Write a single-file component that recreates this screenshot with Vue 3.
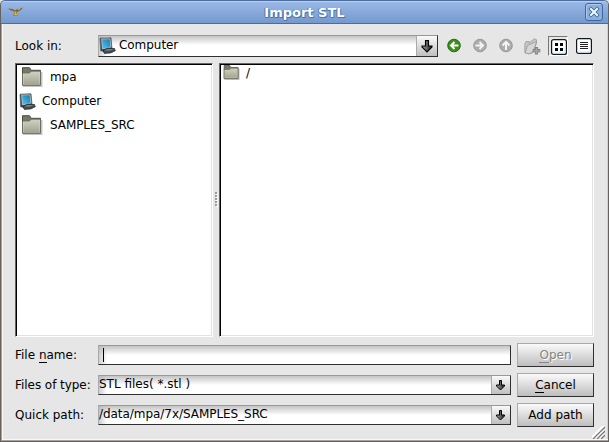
<script setup>
import { ref } from 'vue'
const places = [
  { name: 'mpa', icon: 'folder' },
  { name: 'Computer', icon: 'computer' },
  { name: 'SAMPLES_SRC', icon: 'folder' },
]
const fileType = ref('STL files( *.stl )')
const quickPath = ref('/data/mpa/7x/SAMPLES_SRC')
</script>

<template>
  <div class="window">
    <svg class="defs" width="0" height="0">
      <defs>
        <linearGradient id="folderFill" x1="0" y1="0" x2="0" y2="1"><stop offset="0" stop-color="#d0d1c1"/><stop offset="1" stop-color="#a4a58f"/></linearGradient>
        <linearGradient id="screenFill" x1="1" y1="0" x2="0" y2="1"><stop offset="0" stop-color="#1676ad"/><stop offset="1" stop-color="#5ec5ee"/></linearGradient>
        <linearGradient id="arrowFill" x1="0" y1="0" x2="1" y2="0"><stop offset="0" stop-color="#aaa"/><stop offset=".8" stop-color="#333"/></linearGradient>
        <symbol id="folder" viewBox="0 0 22 20">
          <path d="M2 19.2h18.7V5" fill="none" stroke="#c4c4c0" stroke-width="1.5"/>
          <path d="M1.5 .7h7l1.7 2.6h9.3v14.8h-18z" fill="#777967" stroke="#4a4c42"/>
          <path d="M2 6.5h6.5l2-2H19v13H2z" fill="url(#folderFill)" stroke="#e0e0d2" stroke-width=".7"/>
          <path d="M1.5 6h7l1.7-1.7h9.3v13.8h-18z" fill="none" stroke="#68695b" stroke-width=".8"/>
        </symbol>
        <symbol id="computer" viewBox="0 0 17 17">
          <path d="M1 1.2 12 .8l1 11-7 3-4.4-1z" fill="#343a3b" stroke="#5e6667" stroke-width=".8"/>
          <path d="m2.6 2 8.5-.2.7 8.5-8.5 1.6z" fill="url(#screenFill)" stroke="#b9d8df" stroke-width=".7"/>
          <path d="m4 13.5 4.5-2.2 7 .2.8 2.2-4.5 2.2-6.5.5z" fill="#454d50" stroke="#20272a" stroke-width=".7"/>
          <path d="m5 13.5 3.5-1.5 6-.1-3.5 1.5z" fill="#7d8586"/>
        </symbol>
        <symbol id="down" viewBox="0 0 14 14">
          <path d="M5.5 1.5h3v5.5h3.5v1L7 13 2 8V7h3.5z" fill="url(#arrowFill)" stroke="#000" stroke-width="1.1"/>
        </symbol>
        <symbol id="downSmall" viewBox="0 0 12 12">
          <path d="M4.5 1.5h2V6h3v1l-4 4-4-4V6h3z" fill="url(#arrowFill)" stroke="#000"/>
        </symbol>
      </defs>
    </svg>
    <header class="titlebar">
      <svg class="bird" width="16" height="12" viewBox="0 0 16 12">
        <path d="M0 2.5 4.5 3 7 4.5 9.5 3 15 1.5 13 4 8.7 6.2 8.4 8.5 10 10H5l1.5-2L6 5.5 2 4z" fill="#80652b"/>
        <path d="M6 5.5h2.5L8 7l1.5 2.5H6L7 7z" fill="#e8b42d"/><path d="m9.5 3 4-1-3 2z" fill="#d8c5a5"/>
      </svg>
      <h1>Import STL</h1>
      <button class="close" aria-label="Close">
        <svg width="12" height="12" viewBox="0 0 12 12"><path d="m3 3 6 6m0-6-6 6" stroke="#386597" stroke-width="3.6" stroke-linecap="square"/><path d="m3 3 6 6m0-6-6 6" stroke="#f5f9ff" stroke-width="2" stroke-linecap="square"/></svg>
      </button>
    </header>
    <main>
      <section class="lookup">
        <label>Look in:</label>
        <div class="field location">
          <svg class="pc"><use href="#computer"/></svg><span>Computer</span>
          <button class="drop" aria-label="Choose location"><svg width="14" height="14"><use href="#down"/></svg></button>
        </div>
        <nav class="tools">
          <svg width="14" height="15" viewBox="0 0 14 15"><circle cx="7" cy="7.5" r="6.3" fill="#398f18" stroke="#286d13"/><path d="m7.5 4-3.5 3.5L7.5 11M4.5 7.5h7" fill="none" stroke="#fff" stroke-width="2"/></svg>
          <svg width="14" height="15" viewBox="0 0 14 15"><circle cx="7" cy="7.5" r="6.3" fill="#acacac" stroke="#999"/><path d="m6.5 4 3.5 3.5L6.5 11M9.5 7.5h-7" fill="none" stroke="#f4f4f4" stroke-width="2"/></svg>
          <svg width="14" height="15" viewBox="0 0 14 15"><circle cx="7" cy="7.5" r="6.3" fill="#acacac" stroke="#999"/><path d="M3.5 7.5 7 4l3.5 3.5M7 5v7" fill="none" stroke="#f4f4f4" stroke-width="2"/></svg>
          <svg class="new-folder" width="17" height="17" viewBox="0 0 17 17"><path d="M.8 14.5V6L2 3.5h3V5l5.5-4.2 2 1V5l-3.8 9.8-4.2 1z" fill="#c5c5c5" stroke="#999" stroke-width=".8"/><path d="m1.2 15 2.3-7.5 9-4-2.8 9.5-4.5 2.8z" fill="#d6d6d6" stroke="#999" stroke-width=".8"/><path d="M12.5 9v7.5M8.7 12.7h7.6" stroke="#808080" stroke-width="3.2"/><path d="M12.5 9.8v6m-3-3h6" stroke="#a5a5a5" stroke-width="1.5"/></svg>
          <div class="selected-tool"><svg width="16" height="16" viewBox="0 0 16 16"><rect x=".6" y=".6" width="14.8" height="14.8" rx="2" fill="#fff" stroke="#101820" stroke-width="1.2"/><path d="M2 14h12V9" fill="none" stroke="#c9e4fb"/><path d="M4 4h3v3H4zm5 0h3v3H9zM4 9h3v3H4zm5 0h3v3H9z" fill="#000"/></svg></div>
          <svg class="list-tool" width="16" height="16" viewBox="0 0 16 16"><rect x=".6" y=".6" width="14.8" height="14.8" rx="2" fill="#fff" stroke="#101820" stroke-width="1.2"/><path d="M2 14h12V9" fill="none" stroke="#c9e4fb"/><path d="M4 4.5h8m-8 2h8m-8 2h8m-8 2h8" stroke="#222"/></svg>
        </nav>
      </section>
      <section class="browser">
        <div class="pane places">
          <div v-for="p in places" :key="p.name" class="place" :class="p.icon">
            <svg><use :href="'#' + p.icon"/></svg><span>{{ p.name }}</span>
          </div>
        </div>
        <div class="splitter"><i v-for="n in 5" :key="n"></i></div>
        <div class="pane files"><div class="file"><svg width="17" height="15" viewBox="0 0 22 20" preserveAspectRatio="none"><use href="#folder" width="22" height="20"/></svg><span>/</span></div></div>
      </section>
      <section class="form">
        <label>File <u>n</u>ame:</label>
        <div class="field filename"><span class="caret"></span></div>
        <button class="action disabled"><u>O</u>pen</button>
        <label class="type">Files of type:</label>
        <div class="field"><span>{{ fileType }}</span><button class="drop" aria-label="Choose file type"><svg width="12" height="12"><use href="#downSmall"/></svg></button></div>
        <button class="action"><u>C</u>ancel</button>
        <label>Quick path:</label>
        <div class="field"><span class="path">{{ quickPath }}</span><button class="drop" aria-label="Choose path"><svg width="12" height="12"><use href="#downSmall"/></svg></button></div>
        <button class="action">Add path</button>
      </section>
    </main>
    <svg class="grip" width="13" height="13" viewBox="0 0 13 13"><path d="M0 12 12 0M4 12l8-8M8 12l4-4" stroke="#fff" stroke-width="3"/><path d="M1 13 13 1M5 13l8-8M9 13l4-4" stroke="#777" stroke-width="1.3"/></svg>
  </div>
</template>

<style>
body { margin: 0; background: #dce5f1; overflow: hidden; }
</style>
<style scoped>
* { box-sizing: border-box; }
.window { position: relative; width: 609px; height: 442px; background: #e6e6e6; font: 12px/16px "DejaVu Sans", sans-serif; color: #000; border: 1px solid #65615f; border-top: 0; border-radius: 5px 5px 0 0; overflow: hidden; box-shadow: inset 1px -1px #aaa39d, inset 2px -2px #fff6ed, inset -1px 0 #d6d1cc; }
.defs { position: absolute; }
.titlebar { height: 24px; margin: 0 -1px; padding: 0 5px 0 7px; display: flex; align-items: center; background: linear-gradient(#9bbae6, #7499ce); border: 1px solid #4c6c9e; border-radius: 5px 5px 0 0; box-shadow: inset 0 1px #b5cff4; }
.bird { flex: none; }
h1 { flex: 1; margin: 2px 0 0; text-align: center; font: bold 13px/20px "DejaVu Sans", sans-serif; color: #fff; text-shadow: -1px 0 #4777ac, 1px 1px #4777ac, 0 1px #4777ac; }
button { font: inherit; padding: 0; margin: 0; border: 0; }
.close { width: 18px; height: 18px; flex: none; display: grid; place-items: center; background: #8caeda; border: 1px solid #3e679b; border-radius: 3px; box-shadow: inset 1px 1px #aac7ed; }
main { padding: 11px 14px 0; }
.lookup { display: flex; height: 22px; }
label { width: 83px; flex: none; padding-top: 3px; white-space: pre; }
.field { display: flex; min-width: 0; border: 1px solid #303030; border-top-color: #999; border-left-color: #aaa; background: linear-gradient(90deg, rgba(180,180,180,.65), transparent 8px), linear-gradient(#c4c4c4, #fff 9px); }
.field > span { white-space: pre; }
.location { width: 340px; height: 22px; }
.location > span { padding: 1px 0 0 3px; letter-spacing: -.05px; }
.pc { width: 17px; height: 17px; margin: 1px 0 0; }
.drop { width: 19px; height: 100%; margin-left: auto; border-left: 1px solid #aaa; background: linear-gradient(#fafafa, #bfbfbf); display: grid; place-items: center; flex: none; }
.location .drop { width: 21px; }
.tools { display: flex; gap: 12px; margin-left: 9px; padding-top: 3px; height: 22px; }
.tools > svg { flex: none; }
.tools > .new-folder { margin-left: -1px; }
.selected-tool { width: 20px; height: 20px; flex: none; margin: -2px 0 0 -5px; padding: 2px; border-left: 1px solid #777; border-top: 1px solid #777; border-right: 1px solid #fff; border-bottom: 1px solid #fff; }
.tools .list-tool { margin-left: -4px; }
.browser { display: flex; margin-top: 6px; height: 274px; }
.pane { border: 1px solid #666; border-right-color: #fff; border-bottom-color: #fff; background: #fff; box-shadow: inset 1px 1px #000, inset -1px -1px #e2e2e2; }
.places { width: 198px; padding: 1px 5px; }
.place { display: flex; height: 24px; align-items: center; letter-spacing: -.07px; }
.place svg { width: 22px; height: 20px; flex: none; }
.place span { margin-left: 7px; }
.place.computer svg { width: 17px; height: 17px; margin-left: -2px; }
.place.computer span { margin-left: 6px; }
.splitter { width: 6px; padding-bottom: 3px; display: flex; flex-direction: column; align-items: center; justify-content: center; gap: 1px; }
.splitter i { width: 2px; height: 2px; background: #999; box-shadow: 1px 1px #fff; }
.files { width: 375px; padding: 1px 3px; }
.file { display: flex; height: 17px; }
.file span { margin-left: 6px; }
.form { display: grid; grid-template-columns: 83px 413px 77px; column-gap: 6px; row-gap: 6px; grid-template-columns: 83px 413px 77px; grid-template-rows: repeat(3, 24px); margin-top: 6px; column-gap: 0; }
.form label { align-self: center; padding: 0; }
.form .type { letter-spacing: -.05px; }
.form .field { height: 20px; align-self: center; }
.form .action { margin-left: 6px; }
.path { letter-spacing: -.05px; }
.caret { width: 1px; height: 14px; margin: 2px 0 0 4px; background: #000; }
.action { background: linear-gradient(#fafafa, #bebebe); border: 1px solid #303030; border-top-color: #aaa; border-left-color: #aaa; color: #000; width: 77px; height: 24px; line-height: 20px; }
.disabled { color: #858585; text-shadow: 1px 1px #fff; }
u { text-decoration: none; box-shadow: 0 1px currentColor; }
.grip { position: absolute; right: 3px; bottom: 2px; }
</style>
